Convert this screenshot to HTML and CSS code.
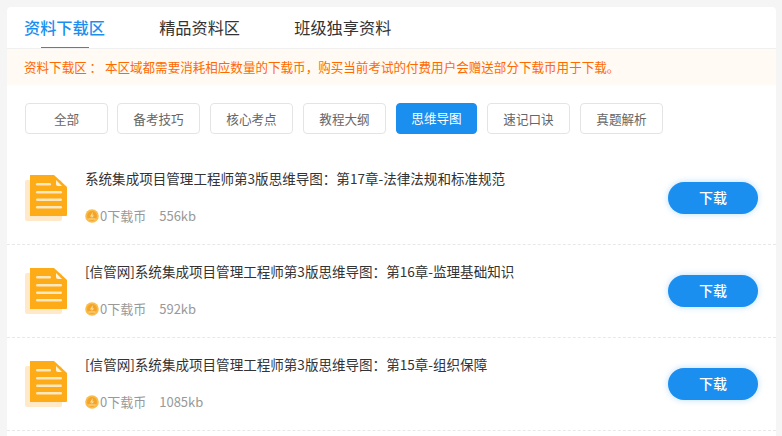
FILE: index.html
```html
<!DOCTYPE html>
<html lang="zh-CN">
<head>
<meta charset="utf-8">
<title>资料下载区</title>
<link rel="stylesheet" href="styles.css">
</head>
<body>
<svg class="defs" width="0" height="0" aria-hidden="true">
  <defs>
    <symbol id="doc" viewBox="0 0 42 46">
      <rect x="0" y="5" width="37" height="41" rx="2" fill="#ffe9c9"/>
      <path d="M5 0H29L42 12V40Q42 41 41 41H5Q5 41 5 40Z" fill="#fdab17"/>
      <path d="M31 5 37 11H33Q31 11 31 9Z" fill="#fff3dc"/>
      <rect x="11" y="8" width="15" height="2.4" rx="1.2" fill="#ffe8bf"/>
      <rect x="11" y="16" width="26" height="2.4" rx="1.2" fill="#ffe8bf"/>
      <rect x="11" y="23.5" width="26" height="2.4" rx="1.2" fill="#ffe8bf"/>
      <rect x="11" y="31" width="26" height="2.4" rx="1.2" fill="#ffe8bf"/>
    </symbol>
    <symbol id="coin" viewBox="0 0 14 14">
      <circle cx="7" cy="7" r="6.8" fill="#fbbd4a"/>
      <circle cx="7" cy="7" r="5" fill="#f3a52a"/>
      <path d="M7.8 3 5 7.4H7L6.2 9.6 9.2 6.4H7.4Z" fill="#ffe0a0"/>
      <path d="M3.4 10H10.6" stroke="#ffe0a0" stroke-width="1"/>
    </symbol>
  </defs>
</svg>
<main class="card">
  <nav class="tabs">
    <a class="tab active">资料下载区</a>
    <a class="tab">精品资料区</a>
    <a class="tab">班级独享资料</a>
  </nav>
  <p class="notice">资料下载区 ： 本区域都需要消耗相应数量的下载币，购买当前考试的付费用户会赠送部分下载币用于下载。</p>
  <div class="filters">
    <a class="chip first">全部</a>
    <a class="chip">备考技巧</a>
    <a class="chip">核心考点</a>
    <a class="chip">教程大纲</a>
    <a class="chip on">思维导图</a>
    <a class="chip">速记口诀</a>
    <a class="chip">真题解析</a>
  </div>
  <ul class="list">
    <li class="item">
      <svg class="doc"><use href="#doc"/></svg>
      <div class="info">
        <div class="name">系统集成项目管理工程师第3版思维导图：第17章-法律法规和标准规范</div>
        <div class="meta"><svg class="coin"><use href="#coin"/></svg><span class="price">0下载币</span><span>556kb</span></div>
      </div>
      <a class="dl">下载</a>
    </li>
    <li class="item">
      <svg class="doc"><use href="#doc"/></svg>
      <div class="info">
        <div class="name">[信管网]系统集成项目管理工程师第3版思维导图：第16章-监理基础知识</div>
        <div class="meta"><svg class="coin"><use href="#coin"/></svg><span class="price">0下载币</span><span>592kb</span></div>
      </div>
      <a class="dl">下载</a>
    </li>
    <li class="item">
      <svg class="doc"><use href="#doc"/></svg>
      <div class="info">
        <div class="name">[信管网]系统集成项目管理工程师第3版思维导图：第15章-组织保障</div>
        <div class="meta"><svg class="coin"><use href="#coin"/></svg><span class="price">0下载币</span><span>1085kb</span></div>
      </div>
      <a class="dl">下载</a>
    </li>
  </ul>
</main>
</body>
</html>
```
FILE: styles.css
```css
* { box-sizing: border-box; }
html, body { height: 100%; overflow: hidden; }
body {
  margin: 0;
  padding: 7px 6px 0 7px;
  background: #f5f5f5;
  font-family: "Noto Sans CJK SC", "Liberation Sans", sans-serif;
  color: #333;
}
.defs { position: absolute; }
.card {
  background: #fff;
  border-radius: 4px 4px 0 0;
  height: 429px;
  overflow: hidden;
}
.tabs {
  display: flex;
  height: 42px;
  padding-left: 17px;
  gap: 54.2px;
  border-bottom: 1px solid #f0f0f0;
}
.tab {
  position: relative;
  font-size: 16.2px;
  line-height: 40px;
  color: #333;
}
.tab.active { color: #1a8ff0; font-weight: 500; }
.tab.active::after {
  content: "";
  position: absolute;
  left: 17px;
  bottom: 0;
  width: 48px;
  height: 1px;
  background: #1a8ff0;
}
.notice {
  margin: 0;
  height: 36px;
  padding-left: 17px;
  background: #fffaf3;
  color: #ff6a00;
  font-size: 12.55px;
  line-height: 36px;
}
.filters {
  display: flex;
  padding: 18px 0 0 18px;
  gap: 10px;
}
.chip {
  width: 83px;
  height: 31px;
  border: 1px solid #e4e4e4;
  border-radius: 4px;
  font-size: 12.6px;
  line-height: 29px;
  text-align: center;
  color: #666;
}
.chip.first { margin-right: -1px; }
.chip.on {
  width: 81px;
  background: #1a8ff0;
  border-color: #1a8ff0;
  color: #fff;
  line-height: 27px;
}
.list { list-style: none; margin: 18px 0 0; padding: 0; }
.item {
  display: flex;
  align-items: flex-start;
  height: 93px;
  padding: 0 18px;
  border-bottom: 1px dashed #e8e8e8;
}
.doc { width: 42px; height: 46px; margin: 23px 18px 0 0; flex: none; }
.info { flex: 1; min-width: 0; padding-top: 16px; }
.name { font-size: 13.56px; line-height: 20px; color: #333; }
.meta {
  display: flex;
  align-items: center;
  margin-top: 18px;
  font-size: 13px;
  line-height: 20px;
  color: #999;
}
.coin { width: 14px; height: 14px; margin-right: 1px; }
.price { margin-right: 13px; }
.dl {
  flex: none;
  width: 90px;
  height: 32px;
  margin: 30px 0 0;
  border-radius: 16px;
  background: #1a8ff0;
  box-shadow: 0 0 6px rgba(26, 143, 240, .3);
  color: #fff;
  font-size: 14px;
  font-weight: 500;
  line-height: 30px;
  text-align: center;
}
```
